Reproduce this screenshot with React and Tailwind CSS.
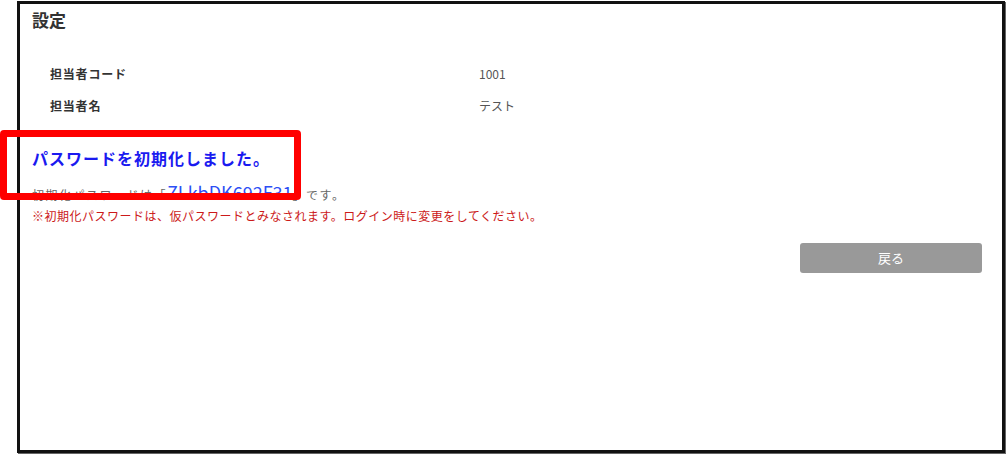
export default function App() {
  return (
    <div className="relative w-[1007px] h-[456px] bg-white" style={{ fontFamily: '"Noto Sans CJK JP", "Noto Sans", sans-serif' }}>
      {/* main panel */}
      <div className="ml-[17px] mt-px w-[988px] h-[452px] border-[3px] border-[#111] shadow-[1px_1px_0_#666]">
        <div className="pl-[12px] pr-[20px] pt-[4px]">
          <h1 className="text-[17px] leading-[24px] font-bold text-[#333]">設定</h1>

          <div className="mt-[26px] pl-[18px] text-[12px]">
            <div className="flex h-[32px] items-center">
              <div className="w-[429px] font-bold tracking-[0.8px] text-[#333]">担当者コード</div>
              <div className="text-[#555]">1001</div>
            </div>
            <div className="flex h-[32px] items-center">
              <div className="w-[429px] font-bold tracking-[0.8px] text-[#333]">担当者名</div>
              <div className="text-[#555]">テスト</div>
            </div>
          </div>

          <p className="mt-[25px] text-[16px] leading-[22px] tracking-[1px] font-bold text-[#1a1af0]">パスワードを初期化しました。</p>

          <p className="mt-[13px] text-[12px] leading-[20px] tracking-[1.5px] text-[#666]">
            初期化パスワードは「<span className="text-[18px] tracking-normal text-[#2d4ff5]">ZLkbDK692F31</span>」です。
          </p>
          <p className="mt-px text-[12px] leading-[20px] tracking-[0.5px] text-[#cc1a1a]">
            ※初期化パスワードは、仮パスワードとみなされます。ログイン時に変更をしてください。
          </p>

          <div className="mt-[17px] flex justify-end">
            <button className="w-[182px] h-[30px] rounded-[3px] bg-[#999] text-[13px] text-white">戻る</button>
          </div>
        </div>
      </div>

      {/* highlight annotation */}
      <div className="absolute left-0 top-[129px] w-[301px] h-[70px] border-[7px] border-[#ff0000] rounded-[4px]" />
    </div>
  );
}
